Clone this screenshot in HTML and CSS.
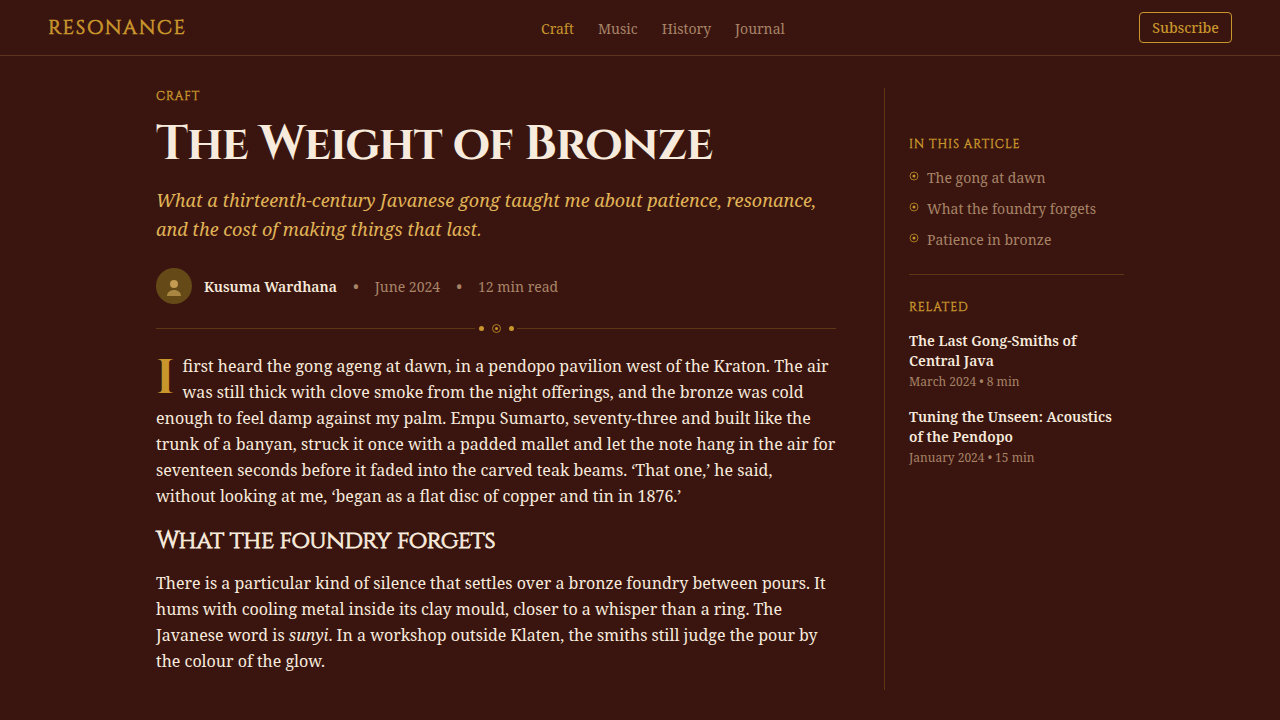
FILE: index.html
```html
<!DOCTYPE html>
<html lang="en">
<head>
    <meta charset="UTF-8">
    <meta name="viewport" content="width=device-width, initial-scale=1.0">
    <title>The Weight of Bronze - Resonance</title>
    <link rel="stylesheet" href="styles.css">
</head>
<body>
    <header class="site-header">
        <a class="logo" href="#">RESONANCE</a>
        <nav class="site-nav">
            <a class="active" href="#">Craft</a>
            <a href="#">Music</a>
            <a href="#">History</a>
            <a href="#">Journal</a>
        </nav>
        <button type="button" class="subscribe">Subscribe</button>
    </header>

    <main class="page">
        <article class="article">
            <p class="label">CRAFT</p>
            <h1>The Weight of Bronze</h1>
            <p class="standfirst">What a thirteenth-century Javanese gong taught me about patience, resonance, and the cost of making things that last.</p>

            <div class="byline">
                <svg class="avatar" viewBox="0 0 36 36" aria-hidden="true">
                    <circle cx="18" cy="18" r="18" fill="#654a18"/>
                    <circle cx="18" cy="16" r="4" fill="#c39b52"/>
                    <path d="M11 28c0-3.600 3-6 7-6s7 2.400 7 6z" fill="#a98743"/>
                </svg>
                <span class="author">Kusuma Wardhana</span>
                <span class="dot">•</span>
                <span class="meta">June 2024</span>
                <span class="dot">•</span>
                <span class="meta">12 min read</span>
            </div>

            <div class="divider">
                <svg viewBox="0 0 42 12" aria-hidden="true">
                    <circle cx="6.500" cy="6.500" r="2.500" fill="#c9962c"/>
                    <circle cx="21.500" cy="6.500" r="4" fill="none" stroke="#b07f24"/>
                    <circle cx="21.500" cy="6.500" r="1.500" fill="#c9962c"/>
                    <circle cx="36.500" cy="6.500" r="2.500" fill="#c9962c"/>
                </svg>
            </div>

            <p class="opening">I first heard the gong ageng at dawn, in a pendopo pavilion west of the Kraton. The air was still thick with clove smoke from the night offerings, and the bronze was cold enough to feel damp against my palm. Empu Sumarto, seventy-three and built like the trunk of a banyan, struck it once with a padded mallet and let the note hang in the air for seventeen seconds before it faded into the carved teak beams. ‘That one,’ he said, without looking at me, ‘began as a flat disc of copper and tin in 1876.’</p>

            <h2>What the foundry forgets</h2>
            <p>There is a particular kind of silence that settles over a bronze foundry between pours. It hums with cooling metal inside its clay mould, closer to a whisper than a ring. The Javanese word is <em>sunyi</em>. In a workshop outside Klaten, the smiths still judge the pour by the colour of the glow.</p>
        </article>

        <aside class="sidebar">
            <h3 class="label">IN THIS ARTICLE</h3>
            <ul class="contents">
                <li>
                    <svg viewBox="0 0 10 10" aria-hidden="true"><circle cx="5" cy="5" r="4" fill="none" stroke="#a87820"/><circle cx="5" cy="5" r="1.500" fill="#c9962c"/></svg>
                    <a href="#">The gong at dawn</a>
                </li>
                <li>
                    <svg viewBox="0 0 10 10" aria-hidden="true"><circle cx="5" cy="5" r="4" fill="none" stroke="#a87820"/><circle cx="5" cy="5" r="1.500" fill="#c9962c"/></svg>
                    <a href="#">What the foundry forgets</a>
                </li>
                <li>
                    <svg viewBox="0 0 10 10" aria-hidden="true"><circle cx="5" cy="5" r="4" fill="none" stroke="#a87820"/><circle cx="5" cy="5" r="1.500" fill="#c9962c"/></svg>
                    <a href="#">Patience in bronze</a>
                </li>
            </ul>

            <h3 class="label">RELATED</h3>
            <div class="related">
                <a href="#">The Last Gong-Smiths of Central Java</a>
                <p>March 2024 • 8 min</p>
            </div>
            <div class="related">
                <a href="#">Tuning the Unseen: Acoustics of the Pendopo</a>
                <p>January 2024 • 15 min</p>
            </div>
        </aside>
    </main>
</body>
</html>
```
FILE: styles.css
```css
* {
    box-sizing: border-box;
}

body {
    margin: 0;
    background-color: #3a1510;
    color: #f7ebdd;
    font-family: "Noto Serif", "Liberation Serif", serif;
    font-size: 16px;
    line-height: 26px;
}

a {
    color: inherit;
    text-decoration: none;
}

h1, h2, h3, p, ul {
    margin: 0;
    padding: 0;
}

.logo,
.label,
h1,
h2,
.opening::first-letter {
    font-family: Cinzel, "Cormorant SC", "Liberation Serif", serif;
}

/* regular cut with slightly heavier strokes for the small settings */
.logo,
.label,
h2 {
    font-weight: 400;
    -webkit-text-stroke: 0.035em currentColor;
}

.site-header {
    display: flex;
    align-items: center;
    justify-content: space-between;
    padding: 12px 48px;
    border-bottom: 1px solid #5c3420;
}

.logo {
    font-size: 20px;
    letter-spacing: 0.08em;
    color: #c9962c;
}

.site-nav {
    display: flex;
    gap: 24px;
    padding-top: 2px;
    font-size: 14px;
    color: #a88467;
}

.site-nav .active {
    color: #c9962c;
}

.subscribe {
    padding: 5px 12px;
    background: none;
    border: 1px solid #c9962c;
    border-radius: 4px;
    color: #c9962c;
    font-family: inherit;
    font-size: 14px;
    font-weight: 500;
    line-height: 19px;
    cursor: pointer;
}

.page {
    display: flex;
    gap: 48px;
    max-width: 1032px;
    margin: 0 auto;
    padding: 32px;
}

.article {
    flex: 1;
}

.label {
    font-size: 12px;
    line-height: 16px;
    letter-spacing: 0.08em;
    color: #c9962c;
}

h1 {
    margin: 12px 0;
    font-size: 48px;
    font-weight: 700;
    line-height: 58px;
    letter-spacing: -0.02em;
}

.standfirst {
    margin-bottom: 24px;
    font-size: 18px;
    font-style: italic;
    line-height: 29px;
    color: #e0b456;
}

.byline {
    display: flex;
    align-items: center;
    font-size: 14px;
    color: #a88467;
}

.avatar {
    width: 36px;
    height: 36px;
    margin-right: 12px;
}

.author,
.meta {
    padding-top: 2px;
}

.author {
    font-weight: 600;
    color: #f7ebdd;
}

.dot {
    margin: 0 16px;
    font-size: 16px;
}

.divider {
    display: flex;
    align-items: center;
    margin: 18px 0 19px;
}

.divider::before,
.divider::after {
    content: "";
    flex: 1;
    height: 1px;
    background-color: #5f3714;
}

.divider svg {
    width: 42px;
    height: 12px;
}

.article > p:not([class]),
.opening {
    margin-bottom: 16px;
}

.opening::first-letter {
    float: left;
    margin: 4px 8px 0 0;
    font-size: 48px;
    font-weight: 700;
    line-height: 44px;
    color: #c9962c;
}

h2 {
    margin-bottom: 12px;
    font-size: 24px;
    line-height: 33px;
    letter-spacing: -0.01em;
}

.sidebar {
    width: 240px;
    padding: 48px 0 0 24px;
    border-left: 1px solid #5f3714;
}

.contents {
    margin: 14px 0 24px;
    padding-bottom: 15px;
    border-bottom: 1px solid #5f3714;
    list-style: none;
    font-size: 14px;
    line-height: 24px;
    color: #a88467;
}

.contents li {
    display: flex;
    gap: 8px;
    margin-bottom: 7px;
}

.contents svg {
    width: 10px;
    height: 10px;
    margin-top: 5px;
}

.related {
    margin-top: 16px;
    font-size: 14px;
    font-weight: 600;
    line-height: 20px;
}

.related p {
    margin-top: 2px;
    font-size: 12px;
    font-weight: 400;
    line-height: 18px;
    color: #a88467;
}
```
